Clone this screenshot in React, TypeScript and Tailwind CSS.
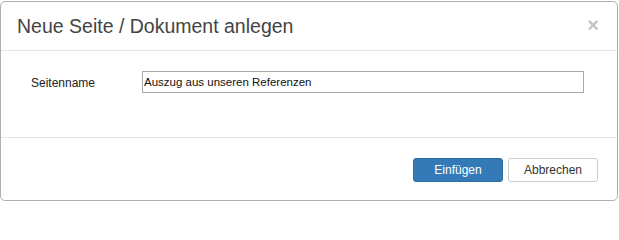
export default function App() {
  return (
    <div className="w-[619px] h-[202px] bg-white pt-px pr-px pb-px font-['Liberation_Sans',Arial,sans-serif] text-[#333]">
      <div className="h-[200px] border border-[#b0b0b0] rounded-[5px] flex flex-col">
        {/* header */}
        <div className="h-[49px] border-b border-[#e5e5e5] flex items-center justify-between pl-4 pr-[18px]">
          <div className="text-[19.5px] text-[#444] pt-px">Neue Seite / Dokument anlegen</div>
          <button className="text-[20px] font-bold text-[#c4c4c4] leading-none pb-[2px]">×</button>
        </div>
        {/* body */}
        <div className="h-[86px] pt-[20px] flex items-start">
          <label className="w-[141px] shrink-0 pl-[30px] pt-[3px] text-[12px] text-[#222]">Seitenname</label>
          <input
            className="w-[442px] h-[22px] border border-[#a9a9a9] px-px text-[11.5px] text-[#111] outline-none"
            defaultValue="Auszug aus unseren Referenzen"
          />
        </div>
        {/* footer */}
        <div className="flex-1 border-t border-[#e5e5e5] flex justify-end items-start pt-[20px] pr-[19px] gap-[5px]">
          <button className="w-[90px] h-[24px] rounded-[3px] bg-[#337ab7] border border-[#2e6da4] text-white text-[12px]">
            Einfügen
          </button>
          <button className="w-[90px] h-[24px] rounded-[3px] bg-white border border-[#ccc] text-[#333] text-[12px]">
            Abbrechen
          </button>
        </div>
      </div>
    </div>
  );
}
